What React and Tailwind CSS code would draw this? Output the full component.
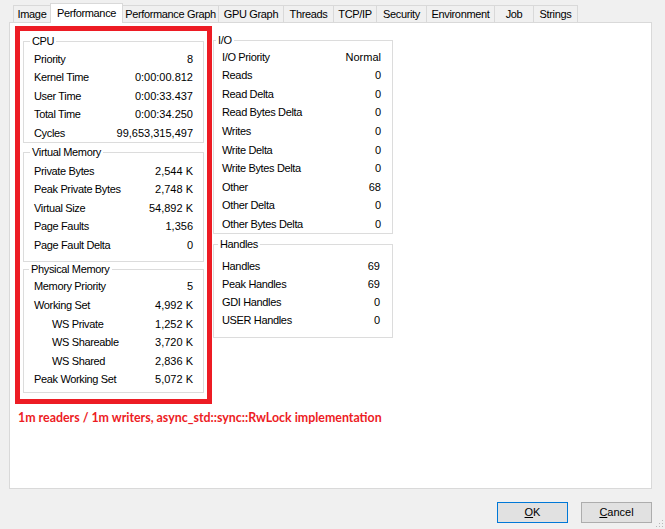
import React from "react";

const tabs = [
  { name: "Image", w: "w-[38px]" },
  { name: "Performance", w: "w-[73px]", active: true },
  { name: "Performance Graph", w: "w-[97px]" },
  { name: "GPU Graph", w: "w-[66px]" },
  { name: "Threads", w: "w-[51px]" },
  { name: "TCP/IP", w: "w-[44px]" },
  { name: "Security", w: "w-[51px]" },
  { name: "Environment", w: "w-[69px]" },
  { name: "Job", w: "w-[40px]" },
  { name: "Strings", w: "w-[45px]" },
];

const cpu = [
  ["Priority", "8"],
  ["Kernel Time", "0:00:00.812"],
  ["User Time", "0:00:33.437"],
  ["Total Time", "0:00:34.250"],
  ["Cycles", "99,653,315,497"],
];

const virtualMemory = [
  ["Private Bytes", "2,544 K"],
  ["Peak Private Bytes", "2,748 K"],
  ["Virtual Size", "54,892 K"],
  ["Page Faults", "1,356"],
  ["Page Fault Delta", "0"],
];

const physicalMemory = [
  ["Memory Priority", "5"],
  ["Working Set", "4,992 K"],
  ["WS Private", "1,252 K", true],
  ["WS Shareable", "3,720 K", true],
  ["WS Shared", "2,836 K", true],
  ["Peak Working Set", "5,072 K"],
];

const io = [
  ["I/O Priority", "Normal"],
  ["Reads", "0"],
  ["Read Delta", "0"],
  ["Read Bytes Delta", "0"],
  ["Writes", "0"],
  ["Write Delta", "0"],
  ["Write Bytes Delta", "0"],
  ["Other", "68"],
  ["Other Delta", "0"],
  ["Other Bytes Delta", "0"],
];

const handles = [
  ["Handles", "69"],
  ["Peak Handles", "69"],
  ["GDI Handles", "0"],
  ["USER Handles", "0"],
];

function Group({ title, rows, className = "", legendClass = "", bodyClass = "", rowClass = "h-[18.6px]" }) {
  return (
    <fieldset className={`border border-[#dcdcdc] ${className}`}>
      <legend className={`px-[2px] leading-[13px] tracking-[-0.35px] ${legendClass}`}>{title}</legend>
      <div className={bodyClass}>
        {rows.map(([label, value, indent]) => (
          <div key={label} className={`flex items-center justify-between whitespace-nowrap ${rowClass}`}>
            <span className={`tracking-[-0.35px] ${indent ? "pl-[18px]" : ""}`}>{label}</span>
            <span>{value}</span>
          </div>
        ))}
      </div>
    </fieldset>
  );
}

export default function App() {
  return (
    <div className="relative w-[665px] h-[529px] bg-[#f0f0f0] text-black text-[11px] font-['Liberation_Sans',Arial,sans-serif] overflow-hidden">
      {/* Tab strip */}
      <div className="ml-[9px] w-[643px] h-[23px] flex items-end whitespace-nowrap tracking-[-0.35px]">
        <div className="w-[4px] h-px bg-[#d9d9d9]" />
        {tabs.map((t, i) =>
          t.active ? (
            <div
              key={t.name}
              className={`${t.w} -ml-px h-[20px] flex items-center justify-center bg-white border-t border-l border-r border-[#d9d9d9]`}
            >
              {t.name}
            </div>
          ) : (
            <div
              key={t.name}
              className={`${t.w} ${i > 0 ? "-ml-px" : ""} h-[18px] flex items-center justify-center bg-[#f0f0f0] border border-[#d9d9d9]`}
            >
              {t.name}
            </div>
          )
        )}
        <div className="flex-1 h-px bg-[#d9d9d9]" />
      </div>

      {/* Tab page */}
      <div className="ml-[9px] w-[643px] h-[466px] bg-white border-l border-r border-b border-[#d9d9d9] pt-[3px] pl-[5px] flex flex-col">
        <div className="flex items-start">
          <div className="w-[197px] h-[378px] border-[5px] border-[#ed1c24] px-[3px]">
            <Group
              title="CPU"
              rows={cpu}
              className="mt-[3.5px]"
              legendClass="ml-[6px]"
              bodyClass="pt-[2px] pl-[10px] pr-[10px]"
            />
            <Group
              title="Virtual Memory"
              rows={virtualMemory}
              className="mt-[3px]"
              legendClass="ml-[6px]"
              bodyClass="pt-[2px] pb-[7px] pl-[10px] pr-[10px]"
            />
            <Group
              title="Physical Memory"
              rows={physicalMemory}
              className="mt-[1px]"
              legendClass="ml-[5px]"
              bodyClass="pt-[1px] pb-[3px] pl-[10px] pr-[10px]"
            />
          </div>

          <div className="ml-[1px] w-[180px] mt-[7.5px]">
            <Group
              title="I/O"
              rows={io}
              legendClass="ml-[2px]"
              bodyClass="pt-[1px] pl-[8px] pr-[11px]"
            />
            <Group
              title="Handles"
              rows={handles}
              className="mt-[4px]"
              legendClass="ml-[4px]"
              bodyClass="pt-[5.5px] pb-[8px] pl-[8px] pr-[12px]"
              rowClass="h-[18px]"
            />
          </div>
        </div>

        <p className="ml-[3px] mt-[5px] text-[12.4px] font-bold text-[#ed1c24] font-['Lato',sans-serif] whitespace-nowrap">
          1m readers / 1m writers, async_std::sync::RwLock implementation
        </p>
      </div>

      {/* Buttons */}
      <div className="ml-[9px] w-[643px] mt-[13px] flex justify-end gap-[13px]">
        <button className="w-[71px] h-[21px] bg-[#e1e1e1] border border-[#0078d7] flex items-center justify-center">
          <span>
            <span className="underline">O</span>K
          </span>
        </button>
        <button className="w-[71px] h-[21px] bg-[#e1e1e1] border border-[#adadad] flex items-center justify-center">
          <span>
            <span className="underline">C</span>ancel
          </span>
        </button>
      </div>

      {/* Size grip */}
      <svg className="absolute right-[1px] bottom-[1px]" width="10" height="10" viewBox="0 0 10 10">
        <g fill="#b8b8b8">
          <rect x="8" y="2" width="1" height="1" />
          <rect x="5" y="5" width="1" height="1" />
          <rect x="8" y="5" width="1" height="1" />
          <rect x="2" y="8" width="1" height="1" />
          <rect x="5" y="8" width="1" height="1" />
          <rect x="8" y="8" width="1" height="1" />
        </g>
      </svg>
    </div>
  );
}
